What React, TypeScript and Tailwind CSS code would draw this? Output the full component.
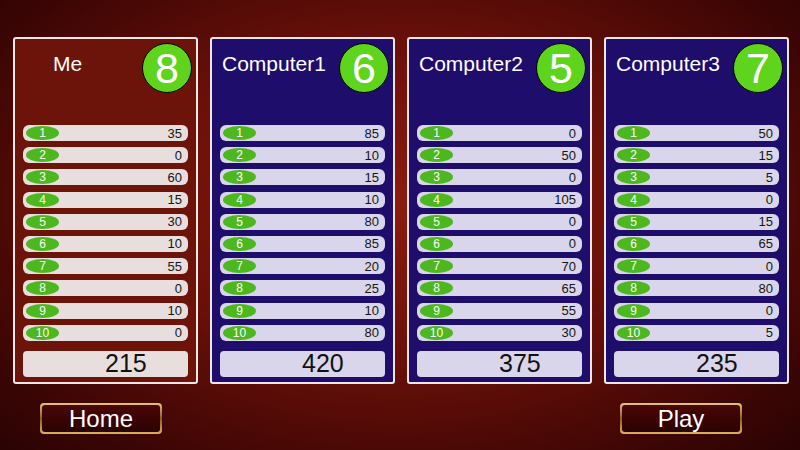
import React from "react";

type Player = {
  name: string;
  badge: number;
  scores: number[];
  me?: boolean;
};

const players: Player[] = [
  { name: "Me", badge: 8, scores: [35, 0, 60, 15, 30, 10, 55, 0, 10, 0], me: true },
  { name: "Computer1", badge: 6, scores: [85, 10, 15, 10, 80, 85, 20, 25, 10, 80] },
  { name: "Computer2", badge: 5, scores: [0, 50, 0, 105, 0, 0, 70, 65, 55, 30] },
  { name: "Computer3", badge: 7, scores: [50, 15, 5, 0, 15, 65, 0, 80, 0, 5] },
];

function Panel({ p }: { p: Player }) {
  const total = p.scores.reduce((a, b) => a + b, 0);
  const rowBg = p.me ? "bg-[#e8dede]" : "bg-[#d9d5ea]";
  return (
    <div
      className={`w-[185px] h-[347px] border-2 border-[#ece6e6] rounded-[3px] flex flex-col ${
        p.me ? "bg-[#6c1409]" : "bg-[#1f0d6c]"
      }`}
    >
      <div className="h-[86px] flex justify-between items-start pt-[4px] pr-[4px]">
        <div
          className={`mt-[9px] text-[21px] leading-[24px] text-white ${
            p.me ? "pl-[38px]" : "pl-[10px]"
          }`}
        >
          {p.name}
        </div>
        <div className="w-[50px] h-[50px] rounded-full bg-[#5ed41c] border-[1.5px] border-black flex items-center justify-center text-white text-[43px] leading-none">
          {p.badge}
        </div>
      </div>
      <div className="px-[8px] flex flex-col gap-[6.2px]">
        {p.scores.map((s, i) => (
          <div
            key={i}
            className={`h-[16px] rounded-[6px] ${rowBg} flex items-center justify-between pl-[3px] pr-[6px]`}
          >
            <div className="w-[33px] h-[14px] rounded-[50%] bg-[#4cb71e] flex items-center justify-center text-white text-[12px] leading-none">
              {i + 1}
            </div>
            <div className="text-[13px] leading-none text-[#151515]">{s}</div>
          </div>
        ))}
      </div>
      <div className="px-[8px] mt-[10px]">
        <div
          className={`h-[26px] rounded-[4px] ${rowBg} flex items-center pl-[82px] text-[25px] leading-none text-[#111]`}
        >
          {total}
        </div>
      </div>
    </div>
  );
}

function Btn({ label }: { label: string }) {
  return (
    <div className="w-[122px] h-[31px] rounded-[4px] p-[2px] bg-[linear-gradient(180deg,#e8c47a_0%,#8a6020_50%,#e0b060_100%)]">
      <div className="w-full h-full rounded-[3px] bg-[linear-gradient(180deg,#4a0606_0%,#2a0202_100%)] flex items-center justify-center text-white text-[24px] leading-none">
        {label}
      </div>
    </div>
  );
}

export default function App() {
  return (
    <div
      className="w-[800px] h-[450px] overflow-hidden bg-[radial-gradient(ellipse_at_50%_45%,#8c1c10_0%,#6a1009_45%,#3a0504_85%,#2a0303_100%)] pt-[37px]"
      style={{ fontFamily: '"Liberation Sans", Arial, sans-serif' }}
    >
      <div className="flex gap-[12px] pl-[13px]">
        {players.map((p) => (
          <Panel key={p.name} p={p} />
        ))}
      </div>
      <div className="flex justify-between pl-[40px] pr-[58px] mt-[19px]">
        <Btn label="Home" />
        <Btn label="Play" />
      </div>
    </div>
  );
}
